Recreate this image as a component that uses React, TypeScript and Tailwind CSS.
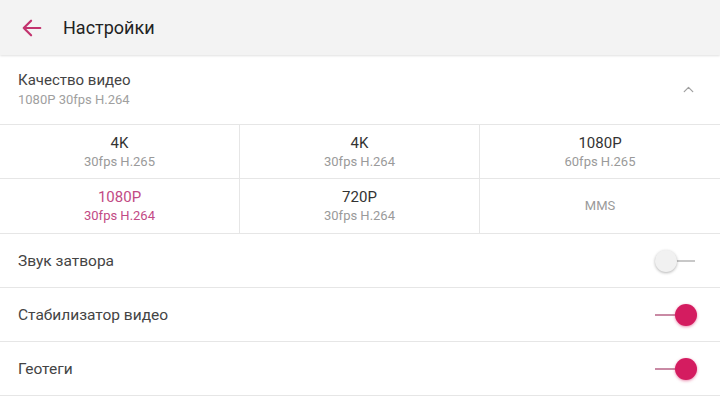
import { ChevronUp } from "lucide-react";

const qualities = [
  { label: "4K", sub: "30fps H.265" },
  { label: "4K", sub: "30fps H.264" },
  { label: "1080P", sub: "60fps H.265" },
  { label: "1080P", sub: "30fps H.264", active: true },
  { label: "720P", sub: "30fps H.264" },
  { label: "MMS" },
];

const toggles = [
  { label: "Звук затвора", on: false },
  { label: "Стабилизатор видео", on: true },
  { label: "Геотеги", on: true },
];

function Toggle({ on }: { on: boolean }) {
  return (
    <div className="relative w-[42px] h-[24px] flex items-center">
      {on ? (
        <>
          <div className="absolute left-0 w-[22px] h-[2px] bg-[#c98aa4]" />
          <div className="absolute right-0 w-[22px] h-[22px] rounded-full bg-[#d41c60] shadow-[0_1px_3px_rgba(212,28,96,0.5)]" />
        </>
      ) : (
        <>
          <div className="absolute right-[2px] w-[20px] h-[2px] bg-[#c8c8c8]" />
          <div className="absolute left-0 w-[22px] h-[22px] rounded-full bg-[#f1f1f1] shadow-[0_1px_3px_rgba(0,0,0,0.3)]" />
        </>
      )}
    </div>
  );
}

export default function App() {
  return (
    <div className="w-[720px] h-[404px] bg-white overflow-hidden font-['Roboto',sans-serif]">
      {/* Header */}
      <div className="h-[55px] bg-[#f3f3f3] flex items-center shadow-[0_1px_2px_rgba(0,0,0,0.12)] relative">
        <svg className="ml-[21px] w-[22px] h-[22px]" viewBox="0 0 24 24" fill="none" stroke="#c2336e" strokeWidth="2.4" strokeLinecap="round" strokeLinejoin="round">
          <path d="M21 12H3M11 4l-8 8 8 8" />
        </svg>
        <span className="ml-[20px] text-[18px] text-[#222]">Настройки</span>
      </div>

      {/* Video quality */}
      <div className="h-[70px] flex items-center justify-between pl-[18px] pr-[23px] border-b border-[#e6e6e6]">
        <div className="flex flex-col">
          <span className="text-[15px] text-[#444] leading-[20px]">Качество видео</span>
          <span className="text-[13px] text-[#a0a0a0] leading-[19px]">1080P 30fps H.264</span>
        </div>
        <ChevronUp className="w-[17px] h-[17px] text-[#a0a0a0]" strokeWidth={1.8} />
      </div>

      {/* Grid */}
      <div className="grid grid-cols-3 border-b border-[#e6e6e6]">
        {qualities.map((q, i) => (
          <div
            key={i}
            className={`h-[54px] flex flex-col items-center justify-center ${i % 3 !== 2 ? "border-r border-[#e6e6e6]" : ""} ${i < 3 ? "border-b border-[#e6e6e6]" : ""}`}
          >
            {q.sub ? (
              <>
                <span className={`text-[15px] leading-[19px] ${q.active ? "text-[#c24a85]" : "text-[#333]"}`}>{q.label}</span>
                <span className={`text-[13px] leading-[17px] ${q.active ? "text-[#c24a85]" : "text-[#9a9a9a]"}`}>{q.sub}</span>
              </>
            ) : (
              <span className="text-[13px] text-[#9a9a9a]">{q.label}</span>
            )}
          </div>
        ))}
      </div>

      {/* Toggles */}
      {toggles.map((t) => (
        <div key={t.label} className="h-[54px] flex items-center justify-between pl-[18px] pr-[23px] border-b border-[#e6e6e6]">
          <span className="text-[15.5px] text-[#444] pt-[3px]">{t.label}</span>
          <Toggle on={t.on} />
        </div>
      ))}
    </div>
  );
}
